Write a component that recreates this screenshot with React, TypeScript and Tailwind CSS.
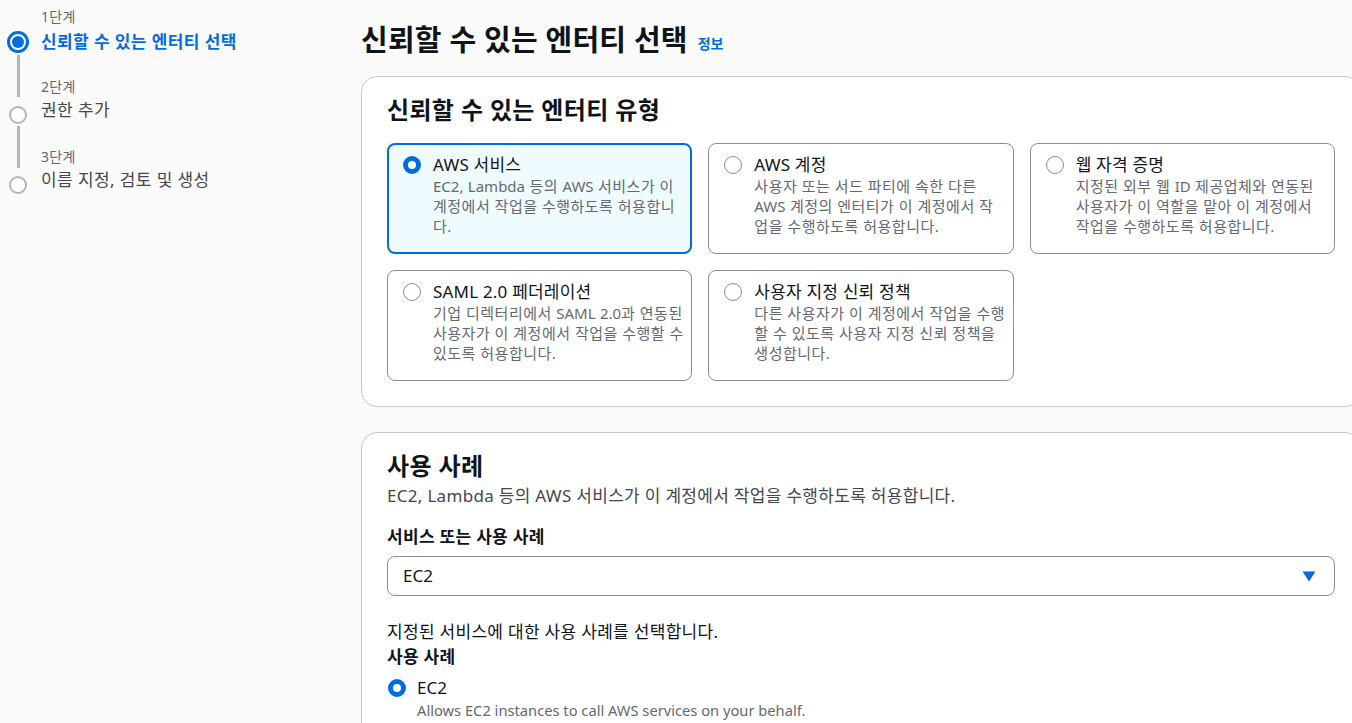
import React from "react";

const font = { fontFamily: "'Noto Sans','Noto Sans CJK KR',sans-serif" };

function Mixed({ text }: { text: string }) {
  const parts = text.split(/([A-Za-z0-9][A-Za-z0-9.,]*)/);
  return (
    <>
      {parts.map((p, i) =>
        /^[A-Za-z0-9]/.test(p) ? (
          <span key={i} className="tracking-normal">
            {p}
          </span>
        ) : (
          <React.Fragment key={i}>{p}</React.Fragment>
        )
      )}
    </>
  );
}

function Radio({ checked }: { checked?: boolean }) {
  return (
    <span className="w-[20px] h-[20px] flex items-center justify-center shrink-0">
      {checked ? (
        <span className="block w-[18px] h-[18px] rounded-full border-[5px] border-[#006ce0] bg-white" />
      ) : (
        <span className="block w-[18px] h-[18px] rounded-full border-[1.5px] border-[#8c8c94] bg-white" />
      )}
    </span>
  );
}

function Tile({ title, lines, checked }: { title: string; lines: string[]; checked?: boolean }) {
  return (
    <div
      className={
        "h-[111px] rounded-[8px] flex gap-[11px] overflow-hidden " +
        (checked
          ? "border-2 border-[#006ce0] bg-[#f0fbff] pl-[13px] pr-[8px] pt-[9px]"
          : "border border-[#8c8c94] bg-white pl-[14px] pr-[9px] pt-[10px]")
      }
    >
      <div className="pt-[1px]">
        <Radio checked={checked} />
      </div>
      <div className="flex flex-col">
        <div className="text-[17px] leading-[22px] tracking-[0.2px] text-[#0f141a]">{title}</div>
        {lines.map((l, i) => (
          <div key={i} className="text-[15px] leading-[20px] tracking-[0.5px] text-[#656871] whitespace-nowrap">
            <Mixed text={l} />
          </div>
        ))}
      </div>
    </div>
  );
}

export default function App() {
  return (
    <div style={font} className="w-[1352px] h-[723px] overflow-hidden bg-[#fafafa] flex items-start">
      {/* sidebar */}
      <div className="w-[361px] shrink-0 pl-[7px] pt-[8px]">
        <div className="flex">
          <div className="w-[22px] flex flex-col items-center pt-[23px]">
            <span className="w-[22px] h-[22px] rounded-full border-[3px] border-[#006ce0] bg-white flex items-center justify-center">
              <span className="w-[12px] h-[12px] rounded-full bg-[#006ce0]" />
            </span>
            <span className="w-[3px] h-[42px] mt-[2px] mb-[9px] bg-[#b4b4bb]" />
            <span className="w-[18px] h-[18px] rounded-full border-2 border-[#b4b4bb] bg-white" />
            <span className="w-[3px] h-[42px] mt-[2px] mb-[8px] bg-[#b4b4bb]" />
            <span className="w-[18px] h-[18px] rounded-full border-2 border-[#b4b4bb] bg-white" />
          </div>
          <div className="pl-[12px] flex flex-col">
            <div className="text-[14px] leading-[18px] tracking-[0.3px] text-[#656871]">1단계</div>
            <div className="text-[17px] leading-[32px] tracking-[0.4px] font-bold text-[#006ce0]">신뢰할 수 있는 엔터티 선택</div>
            <div className="text-[14px] leading-[18px] tracking-[0.3px] text-[#656871] mt-[20px]">2단계</div>
            <div className="text-[17px] leading-[28px] tracking-[0.4px] text-[#424650]">권한 추가</div>
            <div className="text-[14px] leading-[18px] tracking-[0.3px] text-[#656871] mt-[24px]">3단계</div>
            <div className="text-[17px] leading-[28px] tracking-[0.4px] text-[#424650]">이름 지정, 검토 및 생성</div>
          </div>
        </div>
      </div>

      {/* main */}
      <div className="w-[1000px] shrink-0 flex flex-col">
        <div className="h-[76px] shrink-0 flex items-center gap-[10px] pt-[4px]">
          <h1 className="text-[29px] leading-[38px] tracking-[0.2px] font-bold text-[#0f141a]">신뢰할 수 있는 엔터티 선택</h1>
          <span className="text-[14px] font-bold text-[#006ce0] pt-[6px]">정보</span>
        </div>

        <div className="shrink-0 bg-white border border-[#c6c6cd] rounded-[16px] pl-[25px] pr-[25px] pt-[16px] pb-[25px]">
          <h2 className="text-[24px] leading-[34px] tracking-[0.35px] font-bold text-[#0f141a] mb-[16px]">신뢰할 수 있는 엔터티 유형</h2>
          <div className="grid grid-cols-3 gap-x-[16px] gap-y-[16px]">
            <Tile
              checked
              title="AWS 서비스"
              lines={["EC2, Lambda 등의 AWS 서비스가 이", "계정에서 작업을 수행하도록 허용합니", "다."]}
            />
            <Tile
              title="AWS 계정"
              lines={["사용자 또는 서드 파티에 속한 다른", "AWS 계정의 엔터티가 이 계정에서 작", "업을 수행하도록 허용합니다."]}
            />
            <Tile
              title="웹 자격 증명"
              lines={["지정된 외부 웹 ID 제공업체와 연동된", "사용자가 이 역할을 맡아 이 계정에서", "작업을 수행하도록 허용합니다."]}
            />
            <Tile
              title="SAML 2.0 페더레이션"
              lines={["기업 디렉터리에서 SAML 2.0과 연동된", "사용자가 이 계정에서 작업을 수행할 수", "있도록 허용합니다."]}
            />
            <Tile
              title="사용자 지정 신뢰 정책"
              lines={["다른 사용자가 이 계정에서 작업을 수행", "할 수 있도록 사용자 지정 신뢰 정책을", "생성합니다."]}
            />
          </div>
        </div>

        <div className="shrink-0 mt-[25px] bg-white border border-[#c6c6cd] rounded-[16px] pl-[25px] pr-[25px] pt-[16px] pb-[40px]">
          <h2 className="text-[24px] leading-[34px] tracking-[0.35px] font-bold text-[#0f141a]">사용 사례</h2>
          <p className="text-[17px] leading-[26px] tracking-[0.3px] text-[#424650]">EC2, Lambda 등의 AWS 서비스가 이 계정에서 작업을 수행하도록 허용합니다.</p>
          <div className="mt-[16px] text-[17px] leading-[24px] tracking-[0.3px] font-bold text-[#0f141a]">서비스 또는 사용 사례</div>
          <div className="mt-[7px] h-[40px] rounded-[8px] border border-[#8c8c94] flex items-center justify-between pl-[15px] pr-[18px]">
            <span className="text-[17px] text-[#0f141a]">EC2</span>
            <svg width="14" height="11" viewBox="0 0 14 11">
              <path d="M0.5 0.5h13L7 10.5z" fill="#006ce0" />
            </svg>
          </div>
          <p className="mt-[24px] text-[17px] leading-[24px] tracking-[0.3px] text-[#0f141a]">지정된 서비스에 대한 사용 사례를 선택합니다.</p>
          <div className="text-[17px] leading-[26px] tracking-[0.3px] font-bold text-[#0f141a]">사용 사례</div>
          <div className="mt-[6px] flex gap-[10px]">
            <div className="pt-[2px]">
              <Radio checked />
            </div>
            <div className="flex flex-col">
              <div className="text-[17px] leading-[24px] text-[#0f141a]">EC2</div>
              <div className="text-[14.7px] leading-[20px] text-[#656871]">Allows EC2 instances to call AWS services on your behalf.</div>
            </div>
          </div>
        </div>
      </div>
    </div>
  );
}
